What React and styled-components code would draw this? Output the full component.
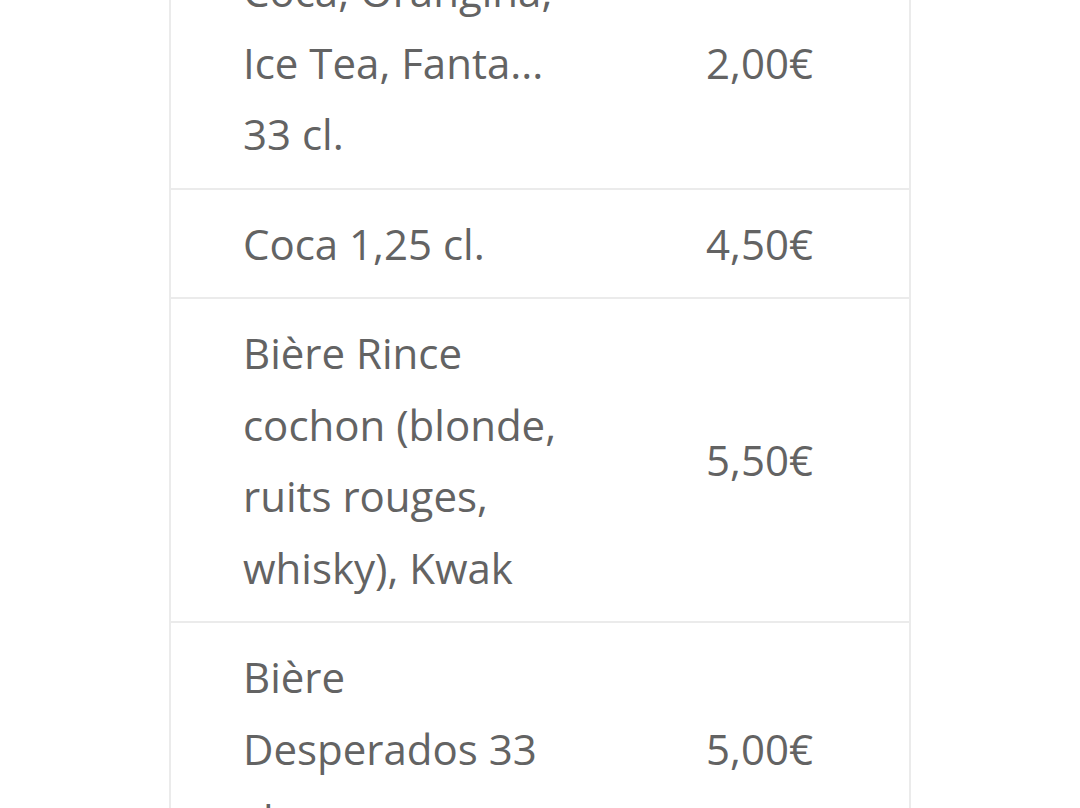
import React from 'react';
import styled, { createGlobalStyle } from 'styled-components';

const GlobalStyle = createGlobalStyle`
  html, body {
    margin: 0;
    padding: 0;
    background: #ffffff;
    overflow: hidden;
  }
`;

const Page = styled.div`
  display: flex;
  justify-content: center;
  height: 808px;
  overflow: hidden;
  font-family: "Open Sans", "Liberation Sans", sans-serif;
`;

const PriceTable = styled.table`
  width: 742px;
  margin-top: -65px;
  border-collapse: collapse;
  border: 2px solid #ebebeb;
  align-self: flex-start;
`;

const Row = styled.tr`
  border-top: 2px solid #ebebeb;
`;

const Cell = styled.td`
  padding: 18px 72px;
  font-size: 42px;
  line-height: 71.5px;
  color: #636363;
  vertical-align: middle;
  width: ${(p) => (p.$price ? '131px' : '319px')};
  white-space: ${(p) => (p.$price ? 'nowrap' : 'normal')};
`;

const items = [
  { name: 'Coca, Orangina, Ice Tea, Fanta... 33 cl.', price: '2,00€' },
  { name: 'Coca 1,25 cl.', price: '4,50€' },
  { name: 'Bière Rince cochon (blonde, ruits rouges, whisky), Kwak', price: '5,50€' },
  { name: 'Bière Desperados 33 cl.', price: '5,00€' },
];

const App = () => {
  return (
    <>
      <GlobalStyle />
      <Page>
        <PriceTable>
          <tbody>
            {items.map((item) => (
              <Row key={item.name}>
                <Cell>{item.name}</Cell>
                <Cell $price>{item.price}</Cell>
              </Row>
            ))}
          </tbody>
        </PriceTable>
      </Page>
    </>
  );
};

export default App;
